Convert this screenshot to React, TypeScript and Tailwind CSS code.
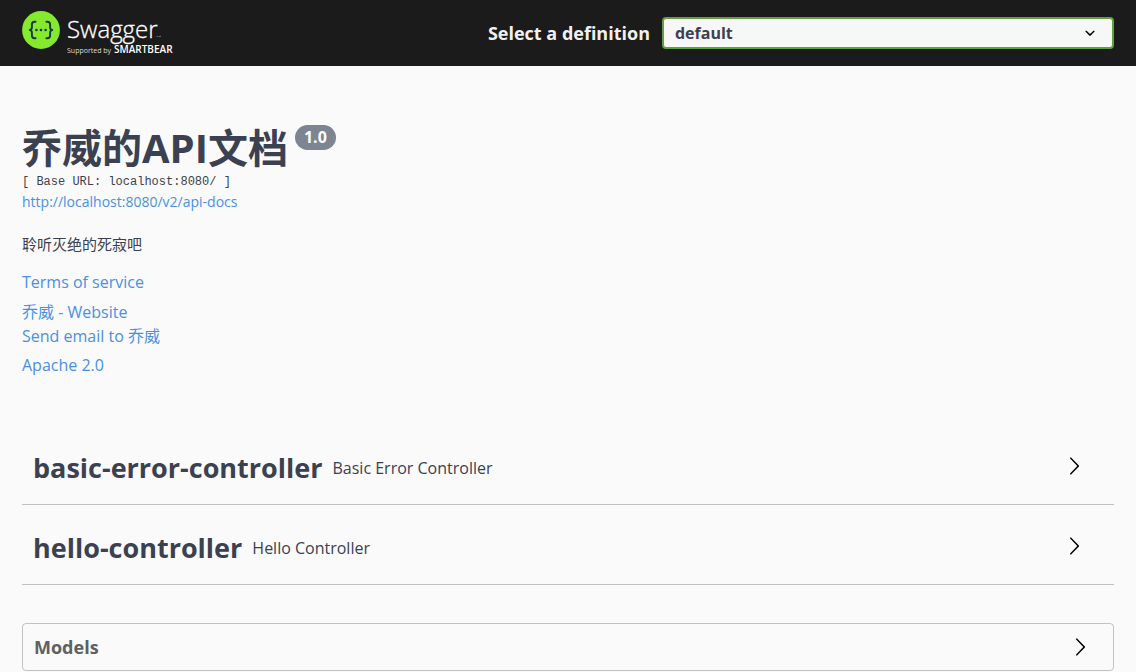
import { ReactNode } from "react";

const SANS = "font-['Open_Sans','Noto_Sans_CJK_SC',sans-serif]";

function Logo() {
  return (
    <a href="#" aria-label="Swagger" className="flex h-11 shrink-0 items-start">
      <svg width="160" height="46" viewBox="0 0 160 46" aria-hidden="true">
        <circle cx="19" cy="19" r="18.9" fill="#85ea2d" />
        <g fill="none" stroke="#173647" strokeWidth="1.9" strokeLinecap="round" strokeLinejoin="round">
          <path d="M13.600 10.800h-1c-1.900 0-2.700 1-2.700 2.600v2.800c0 1.700-.7 2.600-2.100 2.800 1.400.2 2.100 1.100 2.100 2.800v2.800c0 1.700.8 2.700 2.700 2.700h1" />
          <path d="M24.400 10.800h1c1.900 0 2.700 1 2.700 2.600v2.800c0 1.700.7 2.600 2.100 2.800-1.400.2-2.100 1.100-2.100 2.800v2.800c0 1.700-.8 2.700-2.700 2.700h-1" />
        </g>
        <g fill="#173647">
          <circle cx="14.400" cy="19" r="1.300" />
          <circle cx="19" cy="19" r="1.300" />
          <circle cx="23.600" cy="19" r="1.300" />
        </g>
        <g fill="#fff" fontFamily="'Open Sans', sans-serif">
          <text x="45" y="27" fontSize="24" fontWeight="300" stroke="#fff" strokeWidth="0.3">Swagger</text>
          <path d="M134.500 25.500h1.500M137 26v-1l.7.700.7-.7v1" fill="none" stroke="#aaa" strokeWidth="0.500" />
          <text x="45" y="42" fontSize="7" fill="#ddd">Supported by</text>
          <text x="92" y="42" fontSize="10" fontWeight="600">SMARTBEAR</text>
        </g>
      </svg>
    </a>
  );
}

function Chevron() {
  return (
    <svg width="20" height="20" viewBox="0 0 20 20" fill="#000" aria-hidden="true" className="shrink-0">
      <path d="M13.250 10L6.109 2.580c-.268-.27-.268-.707 0-.979.268-.27.701-.27.969 0l7.830 7.908c.268.271.268.709 0 .979l-7.830 7.908c-.268.271-.701.270-.969 0-.268-.269-.268-.707 0-.979L13.250 10z" />
    </svg>
  );
}

function Link({ children, className = "" }: { children: ReactNode; className?: string }) {
  return (
    <a href="#" className={`text-[#4990e2] ${className}`}>
      {children}
    </a>
  );
}

function Tag({ name, description }: { name: string; description: string }) {
  return (
    <h3 className="border-b border-[#3b4151]/30">
      <button type="button" className="flex h-[79px] w-full items-center gap-[10px] pt-[3px] pr-[30px] pl-[11px] text-left">
        <span className="pt-[3px] text-[27px] leading-9 font-bold">{name}</span>
        <span className="flex-1 pt-[3px] text-base">{description}</span>
        <Chevron />
      </button>
    </h3>
  );
}

export default function App() {
  return (
    <div className={`min-h-screen bg-[#fafafa] text-[#3b4151] ${SANS}`}>
      <header className="flex h-[66px] items-center bg-[#1b1b1b] px-[22px]">
        <Logo />
        <form className="ml-auto flex flex-1 items-center justify-end gap-3">
          <label htmlFor="definition" className="text-lg font-bold text-[#f0f0f0]">
            Select a definition
          </label>
          <div className="grid w-[48.5%] items-center">
            <select
              id="definition"
              className="col-start-1 row-start-1 h-8 w-full appearance-none rounded border-2 border-[#62a03f] bg-[#f7f7f7] pr-10 pl-[11px] text-base font-bold"
            >
              <option>default</option>
            </select>
            <svg
              width="20"
              height="20"
              viewBox="0 0 20 20"
              aria-hidden="true"
              className="pointer-events-none col-start-1 row-start-1 mr-[14px] justify-self-end"
            >
              <path d="M13.418 7.859c.271-.268.709-.268.978 0 .27.268.272.701 0 .969l-3.908 3.830c-.270.268-.707.268-.979 0l-3.908-3.830c-.270-.267-.270-.701 0-.969.271-.268.709-.268.978 0L10 11l3.418-3.141z" />
            </svg>
          </div>
        </form>
      </header>

      <main className="px-[22px] pt-[58px]">
        <section className="flex flex-col items-start">
          <h1 className="flex items-start gap-[7px] text-[40px] leading-[48px] font-bold">
            乔威的API文档
            <span className="mt-px rounded-full bg-[#7d8492] px-[9px] text-base leading-[25px] text-white">1.0</span>
          </h1>
          <p className="font-['Liberation_Mono',monospace] text-xs leading-5">[ Base URL: localhost:8080/ ]</p>
          <Link className="text-sm leading-5">http://localhost:8080/v2/api-docs</Link>
          <p className="mt-[22px] text-[15px] leading-5">聆听灭绝的死寂吧</p>
          <div className="mt-4 flex flex-col items-start text-base leading-6">
            <Link>Terms of service</Link>
            <Link className="mt-[6px]">乔威 - Website</Link>
            <Link>Send email to 乔威</Link>
            <Link className="mt-[5px]">Apache 2.0</Link>
          </div>
        </section>

        <section className="mt-12">
          <Tag name="basic-error-controller" description="Basic Error Controller" />
          <Tag name="hello-controller" description="Hello Controller" />
        </section>

        <section className="mt-[38px] rounded border border-[#3b4151]/30">
          <h4>
            <button
              type="button"
              className="flex h-[46px] w-full items-center justify-between pr-[23px] pl-[11px] text-lg font-bold text-[#606060]"
            >
              Models
              <Chevron />
            </button>
          </h4>
        </section>
      </main>
    </div>
  );
}
